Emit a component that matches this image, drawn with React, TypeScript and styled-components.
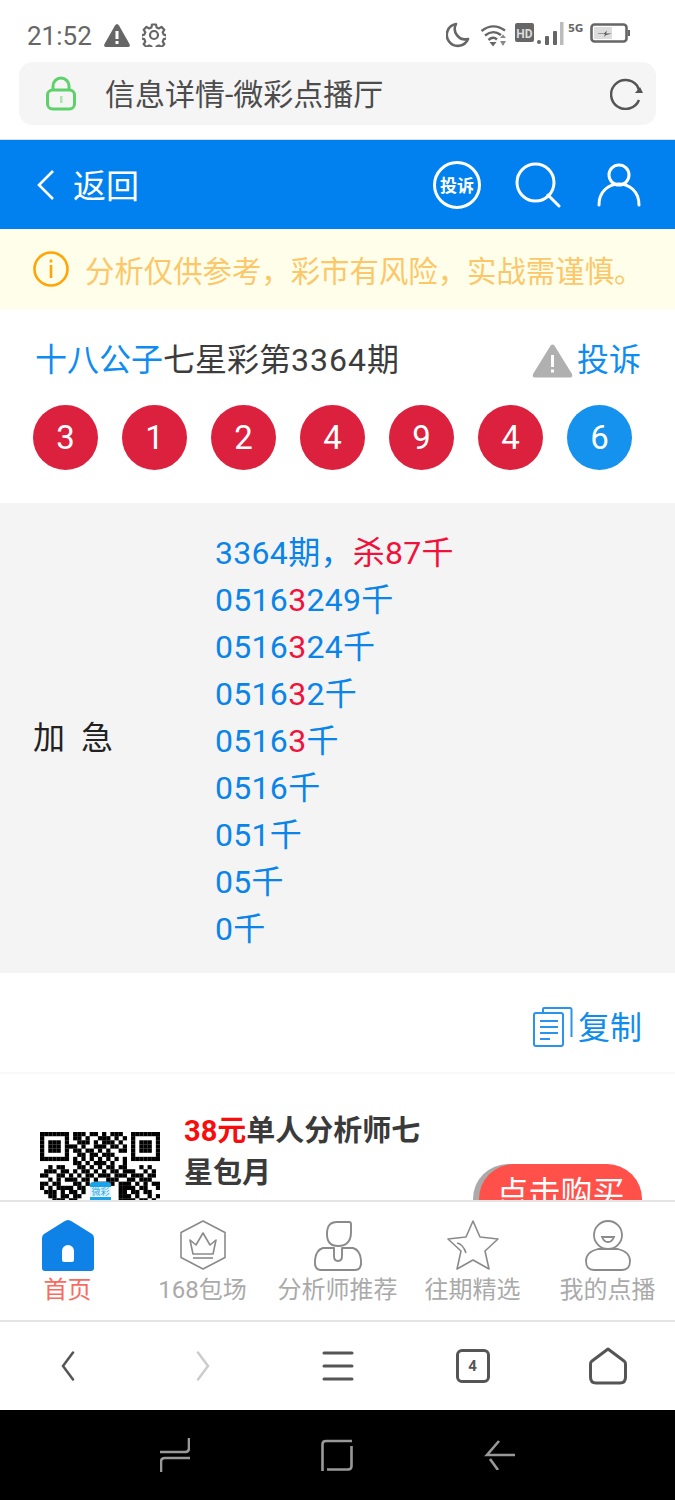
import React from 'react'
import styled, { createGlobalStyle } from 'styled-components'

const GlobalStyle = createGlobalStyle`
  html, body { margin: 0; padding: 0; background: #fff; }
  body { font-family: Roboto, "Noto Sans CJK SC", sans-serif; }
  * { box-sizing: border-box; }
`

const Page = styled.div`
  width: 675px;
  height: 1500px;
  display: flex;
  flex-direction: column;
  overflow: hidden;
`

/* system + browser chrome */
const TopChrome = styled.div`
  height: 140px;
  flex: none;
  border-bottom: 1px solid #dcdcdc;
  padding: 0 19px;
`
const StatusBar = styled.div`
  height: 62px;
  padding-left: 8px;
  display: flex;
  align-items: center;
  justify-content: space-between;
  padding-top: 8px;
  padding-right: 26px;
`
const StatusLeft = styled.div`
  display: flex;
  align-items: center;
  gap: 12px;
`
const Clock = styled.span`
  font-size: 26px;
  color: #666;
  padding-top: 2px;
`
const UrlBar = styled.div`
  height: 63px;
  background: #f5f5f5;
  border-radius: 14px;
  display: flex;
  align-items: center;
  padding: 0 12px 0 27px;
`
const UrlText = styled.span`
  flex: 1;
  margin-left: 29px;
  padding-bottom: 4px;
  font-size: 30px;
  color: #4c4c4c;
`

/* blue header */
const Header = styled.header`
  height: 89px;
  flex: none;
  background: #0081ef;
  display: flex;
  align-items: center;
  padding: 0 34px 0 36px;
  color: #fff;
`
const BackLabel = styled.span`
  font-size: 33px;
  margin-left: 17px;
  padding-bottom: 2px;
  flex: 1;
`
const HeaderIcons = styled.div`
  display: flex;
  align-items: center;
  gap: 34px;
`
const ComplainBadge = styled.div`
  width: 48px;
  height: 48px;
  border: 3px solid #fff;
  border-radius: 50%;
  display: flex;
  align-items: center;
  justify-content: center;
  font-size: 17px;
  font-weight: 700;
  white-space: nowrap;
`

const Notice = styled.div`
  height: 80px;
  flex: none;
  background: #fffeea;
  display: flex;
  align-items: center;
  gap: 16px;
  padding-left: 33px;
  font-size: 29.4px;
  color: #fcc768;
`

/* everything that scrolls under the tab bar */
const Content = styled.main`
  flex: 1;
  min-height: 0;
  overflow: hidden;
`
const TitleRow = styled.div`
  display: flex;
  align-items: center;
  justify-content: space-between;
  padding: 6px 34px 0 35px;
  height: 96px;
  font-size: 32px;
  line-height: 46px;
  color: #3c3c3c;
`
const Author = styled.span`
  color: #0f8cf0;
`
const IssueNumber = styled.span`
  letter-spacing: 1px;
`
const Complain = styled.span`
  display: flex;
  align-items: center;
  gap: 4px;
  color: #0f8cf0;
`
const Balls = styled.div`
  display: flex;
  gap: 24px;
  padding: 0 33px;
  height: 98px;
`
const Ball = styled.div<{ $blue?: boolean }>`
  width: 65px;
  height: 65px;
  border-radius: 50%;
  background: ${props => (props.$blue ? '#1492ee' : '#dc213e')};
  color: #fff;
  font-size: 33px;
  display: flex;
  align-items: center;
  justify-content: center;
`
const Panel = styled.section`
  height: 470px;
  background: #f4f4f4;
  display: flex;
  align-items: center;
  padding-left: 33px;
`
const PanelLabel = styled.div`
  width: 182px;
  flex: none;
  font-size: 32px;
  color: #222;
  display: flex;
  gap: 16px;
  margin-bottom: 6px;
`
const Lines = styled.div`
  font-size: 32px;
  line-height: 47px;
  letter-spacing: 0.3px;
  color: #0a84e8;
  padding-top: 6px;
`
const Hot = styled.span`
  color: #f0123a;
`
const CopyRow = styled.div`
  height: 101px;
  display: flex;
  align-items: center;
  justify-content: flex-end;
  gap: 5px;
  padding: 5px 33px 0 0;
  font-size: 32px;
  color: #0f8cf0;
  border-bottom: 2px solid #f8f8f8;
`
const CopyIcon = styled.svg`
  width: 40px;
  height: 40px;
  margin-top: 3px;
`
const Promo = styled.div`
  display: flex;
  padding: 36px 33px 0 40px;
`
const QrBox = styled.div`
  width: 120px;
  flex: none;
  margin-top: 22px;
`
const PromoText = styled.div`
  width: 250px;
  margin-left: 24px;
  font-size: 29px;
  font-weight: 700;
  line-height: 42px;
  color: #3a3a3a;
`
const Price = styled.span`
  color: #f80d0d;
`
const BuyButton = styled.div`
  margin: 54px 0 0 auto;
  width: 163px;
  height: 70px;
  padding-bottom: 18px;
  flex: none;
  border-radius: 35px;
  background: #ff504a;
  box-shadow: -6px 0 0 #aaa;
  color: #fff;
  font-size: 32px;
  display: flex;
  align-items: center;
  justify-content: center;
  white-space: nowrap;
`

/* app tab bar */
const TabBar = styled.nav`
  height: 120px;
  flex: none;
  background: #fff;
  border-top: 2px solid #e4e4e4;
  display: grid;
  grid-template-columns: repeat(5, 1fr);
`
const Tab = styled.div<{ $active?: boolean }>`
  display: flex;
  flex-direction: column;
  align-items: center;
  padding-top: 18px;
  font-size: 24px;
  line-height: 36px;
  white-space: nowrap;
  color: ${props => (props.$active ? '#f96a5f' : '#aaa')};
`
const TabIcon = styled.svg`
  width: 60px;
  height: 52px;
  display: block;
`

/* browser bottom bar */
const BrowserBar = styled.div`
  height: 90px;
  flex: none;
  border-top: 2px solid #e4e4e4;
  display: grid;
  grid-template-columns: repeat(5, 1fr);
  align-items: center;
  justify-items: center;
  background: #fff;
`
const SystemNav = styled.div`
  height: 90px;
  flex: none;
  background: #000;
  display: flex;
  justify-content: center;
  align-items: center;
  gap: 131px;
  padding-left: 1px;
`
const TabCount = styled.div`
  width: 34px;
  height: 34px;
  border: 3px solid #555;
  border-radius: 6px;
  font-size: 15px;
  font-weight: 700;
  color: #555;
  display: flex;
  align-items: center;
  justify-content: center;
`
const QrSvg = styled.svg`
  display: block;
`

const ResultNumbers = ['3', '1', '2', '4', '9', '4', '6']

const qrRows = [
  '11111110111011010111001111111',
  '10000010110100111010101000001',
  '10111010011101011101001011101',
  '10111011101001110110101011101',
  '10111010110110101001101011101',
  '10000010011011011100001000001',
  '11111110101010101010101111111',
  '00000000110101110100100000000',
  '00101100011010101101100010100',
  '01110110101101010110111001010',
  '11001101010110111011101110110',
  '00101011101101001110011011100',
  '11011000110100111101110101011',
  '10101111011000000001111011001',
  '01110101101000000001101101100',
  '00110110110000000001110100101',
  '00011101100000000001111011010',
]

const QR_CELL = 120 / 29

const QrCode = () => (
  <QrSvg width="120" height="70" viewBox="0 0 120 70">
    {qrRows.map((row, y) =>
      row.split('').map((c, x) =>
        c === '1' ? <rect key={`${x}-${y}`} x={x * QR_CELL} y={y * QR_CELL} width={QR_CELL + 0.1} height={QR_CELL + 0.1} fill="#000" /> : null
      )
    )}
    <rect x="50" y="50" width="21" height="20" rx="3" fill="#1ba3ea" />
    <rect x="50" y="55" width="21" height="10" fill="#e6f5fd" />
    <text x="60.500" y="63" fontSize="9" textAnchor="middle" fill="#1ba3ea">微彩</text>
  </QrSvg>
)

const StatusIcons = () => (
  <svg width="184" height="28" viewBox="0 0 184 28" fill="none">
    <path d="M10 3 A11 11 0 1 0 22 18 A10.5 10.5 0 0 1 10 3Z" stroke="#666" strokeWidth="2.6" strokeLinejoin="round" />
    <path d="M35.5 10 Q47 1 59 9.500M39 14.500 Q47 8 55 14M42.500 19 Q47 15 51 18.500" stroke="#666" strokeWidth="2.4" />
    <path d="M43.500 21h7l-3.500 4.500Z" fill="#666" />
    <path d="M54 17l3-3.500 3 3.500ZM54 20l3 5 3-5Z" fill="#888" />
    <rect x="69" y="2" width="19" height="19" rx="2" fill="#666" />
    <text x="78.500" y="16.500" fontFamily="Roboto" fontSize="12" fontWeight="700" textAnchor="middle" fill="#ddd">HD</text>
    <circle cx="93" cy="21" r="2" fill="#666" />
    <rect x="99" y="15" width="4" height="9" rx="1" fill="#666" />
    <rect x="107" y="10" width="4" height="14" rx="1" fill="#666" />
    <rect x="114" y="1" width="3.500" height="23" fill="#bbb" />
    <text x="122" y="11" fontFamily="'DejaVu Sans', sans-serif" fontSize="10" fontWeight="700" fill="#666">5G</text>
    <rect x="145.500" y="3.500" width="35" height="17" rx="3" stroke="#666" strokeWidth="2.6" />
    <rect x="148" y="6" width="18" height="12" fill="#ddd" />
    <path d="M152 12.500h6l3-3-1 3h6l-6 1.500-2 2 1-3h-7Z" fill="#555" />
    <path d="M183 9v6" stroke="#666" strokeWidth="2.500" />
  </svg>
)

export default function App() {
  return (
    <Page>
      <GlobalStyle />
      <TopChrome>
        <StatusBar>
          <StatusLeft>
            <Clock>21:52</Clock>
            <svg width="26" height="23" viewBox="0 0 26 23">
              <path d="M13 0 Q14 0 15 1.500 L25.500 20 Q26.500 23 24 23 H2 Q-.5 23 .5 20 L11 1.500 Q12 0 13 0Z" fill="#666" />
              <rect x="11.500" y="7" width="3" height="8" fill="#fff" />
              <rect x="11.500" y="17" width="3" height="3" fill="#fff" />
            </svg>
            <svg width="24" height="24" viewBox="0 0 24 24" fill="none" stroke="#666" strokeWidth="2.200" strokeLinejoin="round">
              <path d="M10 1.500h4l.6 3 2.200 1 2.700-1.600 2.800 2.800-1.600 2.700 1 2.200 3 .6v3.400l-3 .6-1 2.400 1.600 2.600-2.800 2.800-2.700-1.600-2.200 1-.6 3h-4l-.6-3-2.200-1-2.700 1.600-2.800-2.800 1.600-2.600-1-2.400-3-.6v-3.400l3-.6 1-2.200-1.600-2.700 2.800-2.800 2.700 1.600 2.200-1z" />
              <circle cx="12" cy="12" r="4" />
            </svg>
          </StatusLeft>
          <StatusIcons />
        </StatusBar>
        <UrlBar>
          <svg width="30" height="35" viewBox="0 0 30 35" fill="none">
            <path d="M7 14V10a8 8 0 0 1 16 0v4" stroke="#5ed16a" strokeWidth="3" />
            <rect x="1.500" y="14" width="27" height="19" rx="5" stroke="#5ed16a" strokeWidth="3" />
            <rect x="14" y="20" width="2.500" height="7" fill="#a7e6ae" />
          </svg>
          <UrlText>信息详情-微彩点播厅</UrlText>
          <svg width="34" height="32" viewBox="0 0 34 32" fill="none">
            <path d="M29 22A14.500 14.500 0 1 1 27 7.500L30 14" stroke="#555" strokeWidth="2.500" />
            <path d="M25 15h8l-3-6Z" fill="#555" />
          </svg>
        </UrlBar>
      </TopChrome>

      <Header>
        <svg width="20" height="32" viewBox="0 0 20 32" fill="none">
          <path d="M17 2 L3 16 L17 30" stroke="#fff" strokeWidth="2.600" />
        </svg>
        <BackLabel>返回</BackLabel>
        <HeaderIcons>
          <ComplainBadge>投诉</ComplainBadge>
          <svg width="46" height="46" viewBox="0 0 46 46" fill="none" stroke="#fff" strokeWidth="3" strokeLinecap="round">
            <circle cx="20.500" cy="20.500" r="18.500" />
            <path d="M33 33 L44 44" />
          </svg>
          <svg width="46" height="44" viewBox="-2 0 46 44" fill="none" stroke="#fff" strokeWidth="3" strokeLinecap="round">
            <circle cx="22" cy="12" r="10" />
            <path d="M2 42 C2 28 12 21 22 21 C32 21 42 28 42 42" />
          </svg>
        </HeaderIcons>
      </Header>

      <Notice>
        <svg width="36" height="36" viewBox="0 0 36 36" fill="none" stroke="#ffa505" strokeWidth="2.600">
          <circle cx="18" cy="18" r="16.500" />
          <path d="M18 14v13M18 8.500v3" />
        </svg>
        <span>分析仅供参考，彩市有风险，实战需谨慎。</span>
      </Notice>

      <Content>
        <TitleRow>
          <span><Author>十八公子</Author>七星彩第<IssueNumber>3364</IssueNumber>期</span>
          <Complain>
            <svg width="41" height="35" viewBox="0 0 41 35">
              <path d="M20.500 1.500 Q22 1.500 23 3.500 L40 31 Q41 34.500 38 34.500 H3 Q0 34.500 1 31 L18 3.500 Q19 1.500 20.500 1.500Z" fill="#b0b0b0" />
              <rect x="19" y="12" width="3" height="12" fill="#fff" />
              <rect x="19" y="26.500" width="3" height="3" fill="#fff" />
            </svg>
            投诉
          </Complain>
        </TitleRow>
        <Balls>
          {ResultNumbers.map((n, i) => (
            <Ball key={i} $blue={i === 6}>{n}</Ball>
          ))}
        </Balls>
        <Panel>
          <PanelLabel><span>加</span><span>急</span></PanelLabel>
          <Lines>
            <div>3364期，<Hot>杀87千</Hot></div>
            <div>0516<Hot>3</Hot>249千</div>
            <div>0516<Hot>3</Hot>24千</div>
            <div>0516<Hot>3</Hot>2千</div>
            <div>0516<Hot>3</Hot>千</div>
            <div>0516千</div>
            <div>051千</div>
            <div>05千</div>
            <div>0千</div>
          </Lines>
        </Panel>
        <CopyRow>
          <CopyIcon viewBox="0 0 40 40" fill="none" stroke="#2a93ee" strokeWidth="2">
            <path d="M10 5 V2 a1 1 0 0 1 1-1 H37 a1.500 1.500 0 0 1 1.500 1.500 V30" />
            <path d="M3 6 H28 a2 2 0 0 1 2 2 V37 a2 2 0 0 1-2 2 H3 a2 2 0 0 1-2-2 V8 a2 2 0 0 1 2-2Z" />
            <path d="M7 14H25M7 20H25M7 26H25M7 32H17" />
          </CopyIcon>
          复制
        </CopyRow>
        <Promo>
          <QrBox><QrCode /></QrBox>
          <PromoText><Price>38元</Price>单人分析师七星包月</PromoText>
          <BuyButton>点击购买</BuyButton>
        </Promo>
      </Content>

      <TabBar>
        <Tab $active>
          <TabIcon viewBox="0 0 60 52">
            <path d="M30 0 Q32 0 34 1.500 L54 14 Q56 15.500 56 18 V48 Q56 51 53 51 H7 Q4 51 4 48 V18 Q4 15.500 6 14 L26 1.500 Q28 0 30 0Z" fill="#0f82e8" />
            <path d="M24 40 V31 a6 6 0 0 1 12 0 V40 Q36 42 34 42 H26 Q24 42 24 40Z" fill="#fff" />
          </TabIcon>
          首页
        </Tab>
        <Tab>
          <TabIcon viewBox="0 0 60 52" fill="none" stroke="#8a8a8a" strokeWidth="1.600" strokeLinejoin="round">
            <path d="M30 1 L52 12.500 V37.500 L30 49 L8 37.500 V12.500Z" />
            <path d="M17 20 L23 25 L30 13 L37 25 L43 20 L40 34 H20Z" />
            <path d="M20 38 H40" />
          </TabIcon>
          168包场
        </Tab>
        <Tab>
          <TabIcon viewBox="0 0 60 52" fill="none" stroke="#8a8a8a" strokeWidth="1.900" strokeLinejoin="round">
            <path d="M29 2 H41 Q43 2 43 4 V12 Q43 26 30 26 Q19 26 19 14 Q19 2 29 2Z" />
            <path d="M26 28 H15 Q8 30 7 40 Q6 50 13 50 H47 Q54 50 53 40 Q52 30 45 28 H34 V36 Q34 41 30 41 Q26 41 26 36Z" />
          </TabIcon>
          分析师推荐
        </Tab>
        <Tab>
          <TabIcon viewBox="0 0 60 52" fill="none" stroke="#8a8a8a" strokeWidth="1.600" strokeLinejoin="round">
            <path d="M30 1 L37 17 L55 19 L42 31 L46 49 L30 40 L14 49 L18 31 L5 19 L23 17Z" />
            <path d="M14 23 Q20 24 23 33" />
          </TabIcon>
          往期精选
        </Tab>
        <Tab>
          <TabIcon viewBox="0 0 60 52" fill="none" stroke="#8a8a8a" strokeWidth="1.800">
            <circle cx="30" cy="15" r="14" />
            <path d="M24 17 H36 Q34 22 30 22 Q26 22 24 17Z" />
            <path d="M20 29 H40 Q52 32 52 41 Q52 50 44 50 H16 Q8 50 8 41 Q8 32 20 29Z" />
          </TabIcon>
          我的点播
        </Tab>
      </TabBar>

      <BrowserBar>
        <svg width="14" height="30" viewBox="0 0 14 30" fill="none" stroke="#555" strokeWidth="2.500" strokeLinecap="round">
          <path d="M12 1.500 L2 15 L12 28.500" />
        </svg>
        <svg width="14" height="30" viewBox="0 0 14 30" fill="none" stroke="#ccc" strokeWidth="2.500" strokeLinecap="round">
          <path d="M2 1.500 L12 15 L2 28.500" />
        </svg>
        <svg width="32" height="32" viewBox="0 0 32 32" fill="none" stroke="#555" strokeWidth="3" strokeLinecap="round">
          <path d="M2 3H30M2 16H30M2 29H30" />
        </svg>
        <TabCount>4</TabCount>
        <svg width="38" height="38" viewBox="0 0 38 38" fill="none" stroke="#555" strokeWidth="3" strokeLinejoin="round">
          <path d="M19 2 L35 14 Q36.500 15 36.500 17 V30 Q36.500 36 31 36 H7 Q1.500 36 1.500 30 V17 Q1.500 15 3 14Z" />
        </svg>
      </BrowserBar>

      <SystemNav>
        <svg width="30" height="34" viewBox="0 0 30 34" fill="none" stroke="#999" strokeWidth="2.600">
          <path d="M29 0 V10 Q29 14 25 14 H0M30 20 H5 Q1 20 1 24 V34" />
        </svg>
        <svg width="32" height="32" viewBox="0 0 32 32" fill="none" stroke="#999" strokeWidth="2.600">
          <path d="M31 2 H5 Q1.500 2 1.500 5 V32M6 30.500 H27 Q30.500 30.500 30.500 27 V7" />
        </svg>
        <svg width="32" height="30" viewBox="0 0 32 30" fill="none" stroke="#999" strokeWidth="2.600">
          <path d="M31 15 H3 L15 1M6 19 L14 30" />
        </svg>
      </SystemNav>
    </Page>
  )
}
